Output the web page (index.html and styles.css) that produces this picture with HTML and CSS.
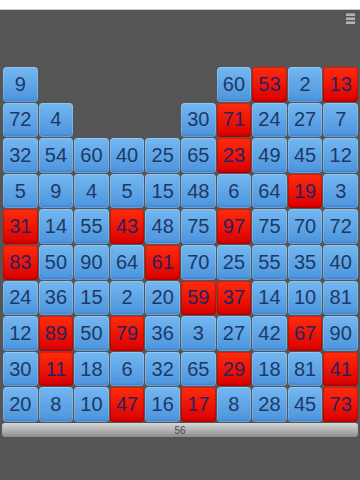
FILE: index.html
```html
<!DOCTYPE html>
<html lang="en">
<head>
  <meta charset="UTF-8" />
  <meta name="viewport" content="width=device-width, initial-scale=1.0" />
  <title>Number Tiles</title>
  <link rel="stylesheet" href="styles.css">
</head>
<body>
  <div class="topbar"></div>

  <div class="toolbar">
    <div class="menu-btn">
      <span></span><span></span><span></span>
    </div>
  </div>

  <div class="board" id="board"></div>

  <div class="score">56</div>

  <script>
    // 0 = empty cell, negative = red tile
    const rows = [
      [9, 0, 0, 0, 0, 0, 60, -53, 2, -13],
      [72, 4, 0, 0, 0, 30, -71, 24, 27, 7],
      [32, 54, 60, 40, 25, 65, -23, 49, 45, 12],
      [5, 9, 4, 5, 15, 48, 6, 64, -19, 3],
      [-31, 14, 55, -43, 48, 75, -97, 75, 70, 72],
      [-83, 50, 90, 64, -61, 70, 25, 55, 35, 40],
      [24, 36, 15, 2, 20, -59, -37, 14, 10, 81],
      [12, -89, 50, -79, 36, 3, 27, 42, -67, 90],
      [30, -11, 18, 6, 32, 65, -29, 18, 81, -41],
      [20, 8, 10, -47, 16, -17, 8, 28, 45, -73]
    ];

    const board = document.getElementById("board");
    rows.forEach(row => {
      row.forEach(n => {
        const cell = document.createElement("div");
        if (n === 0) {
          cell.className = "cell";
        } else {
          cell.className = n < 0 ? "tile red" : "tile";
          cell.textContent = Math.abs(n);
        }
        board.appendChild(cell);
      });
    });
  </script>
</body>
</html>
```

FILE: styles.css
```css
body {
  margin: 0;
  background-color: #555555;
  font-family: "Liberation Sans", Arial, sans-serif;
  width: 360px;
  height: 480px;
  overflow: hidden;
}
.topbar {
  height: 9px;
  background: #ffffff;
  border-bottom: 1px solid #c9c9c9;
}
.toolbar {
  display: flex;
  justify-content: flex-end;
  padding: 3px 5px 0 0;
  height: 57px;
  box-sizing: border-box;
}
.menu-btn {
  display: flex;
  flex-direction: column;
  gap: 1px;
  width: 9px;
}
.menu-btn span {
  height: 2px;
  background: #b4b4b4;
  border-top: 1px solid #8c8c8c;
}
.board {
  display: grid;
  grid-template-columns: repeat(10, 1fr);
  grid-auto-rows: 34.6px;
  gap: 1px;
  margin: 0 2px 0 3px;
}
.tile {
  display: flex;
  align-items: center;
  justify-content: center;
  border-radius: 4px;
  font-size: 20px;
  color: #1e3966;
  background: linear-gradient(#74b8f1, #4b93dc);
  box-shadow: inset 0 0 0 1px rgba(255, 255, 255, 0.22), inset 0 -2px 2px rgba(30, 80, 150, 0.25);
}
.tile.red {
  color: #2e2060;
  background: linear-gradient(#ff2c0c, #d90000);
  box-shadow: inset 0 0 0 1px rgba(160, 0, 0, 0.35), inset 0 -2px 2px rgba(120, 0, 0, 0.25);
}
.score {
  margin: 1px 2px 0 2px;
  height: 14px;
  border-radius: 3px;
  background: linear-gradient(#d6d6d6, #a4a4a4 70%, #8a8a8a);
  color: #4a4a4a;
  font-size: 10px;
  line-height: 15px;
  text-align: center;
}
```
